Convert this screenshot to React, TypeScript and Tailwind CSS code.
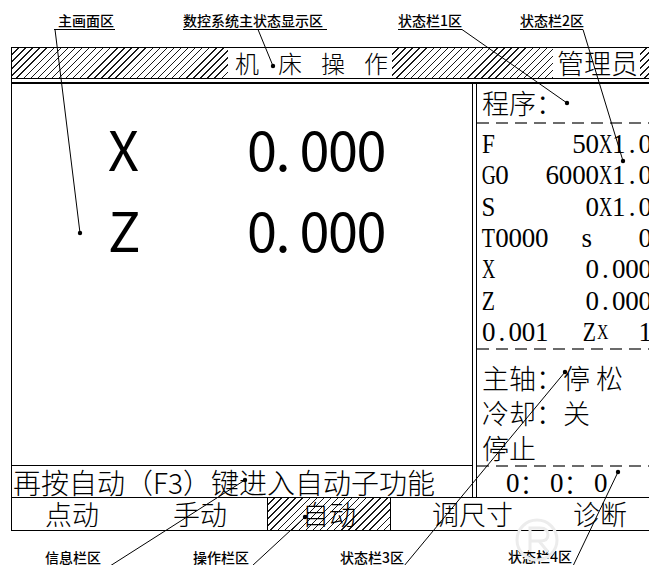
import React from "react";

const HATCH = "bg-[repeating-linear-gradient(135deg,transparent_0_4px,#1a1a1a_4px_5px)]";
const DASH = "h-[2px] bg-[repeating-linear-gradient(to_right,#6b6b6b_0_12px,transparent_12px_19px)]";
const CJK = "font-['Noto_Sans_CJK_SC',sans-serif]";
const SERIF = "font-['Liberation_Serif','Noto_Sans_CJK_SC',serif]";

const SQUEEZE: Record<string, string> = {
  X: "inline-block scale-x-[0.68]",
  Z: "inline-block scale-x-[0.8]",
  G: "inline-block scale-x-[0.72]",
  T: "inline-block scale-x-[0.8]",
  F: "inline-block scale-x-[0.86]",
  S: "inline-block scale-x-[0.92]",
};

function M({ t, className = "" }: { t: string; className?: string }) {
  return (
    <span className={"inline-flex " + className}>
      {Array.from(t).map((c, i) => (
        <span key={i} className="inline-flex w-[13.3px] justify-center">
          {c === " " ? "\u00a0" : SQUEEZE[c] ? <span className={SQUEEZE[c]}>{c}</span> : c}
        </span>
      ))}
    </span>
  );
}

function Row({ children }: { children: React.ReactNode }) {
  return (
    <div className={"flex h-[31.33px] leading-[31.33px] whitespace-nowrap " + SERIF}>{children}</div>
  );
}

export default function App() {
  return (
    <div className={"relative w-[649px] h-[565px] overflow-hidden bg-white text-black " + CJK}>
      <div className="pt-[47px] pl-[11px]">
        <div className="w-[638px] border-l border-black">
          {/* header */}
          <div className="flex h-[32px] border-y border-black">
            <div className={"w-[216px] " + HATCH} />
            <div className="w-[164px] pl-[7px] text-[24px] leading-[30px] tracking-[19px] font-light whitespace-nowrap">
              机床操作
            </div>
            <div className={"w-[161px] " + HATCH} />
            <div className="w-[87px] pl-[4px] text-[27px] leading-[30px] font-light whitespace-nowrap">管理员</div>
            <div className={"flex-1 " + HATCH} />
          </div>
          <div className="h-[3px]" />
          {/* body */}
          <div className="border-t-2 border-black">
            <div className="flex">
              {/* left column: main screen + info bar */}
              <div className="w-[460px] flex flex-col">
                <div className="h-[381px] pt-[37px] pl-[96px]">
                  <div className="flex h-[54px] text-[54px] leading-none">
                    <span className="w-[139px]">X</span>
                    <span className="tracking-[-1.5px]">0. 000</span>
                  </div>
                  <div className="flex h-[54px] mt-[27px] text-[54px] leading-none">
                    <span className="w-[139px]">Z</span>
                    <span className="tracking-[-1.5px]">0. 000</span>
                  </div>
                </div>
                <div className="h-[32px] border-t border-black pt-[2px] pl-[1px] text-[28px] leading-[29px] font-light whitespace-nowrap">
                  再按自动（F3）键进入自动子功能
                </div>
              </div>
              {/* double separator */}
              <div className="w-[5px] border-x border-black" />
              {/* right column: status bars */}
              <div className="flex-1 flex flex-col">
                <div className="h-[38px] pl-[5px] text-[27px] leading-[38px] font-light whitespace-nowrap">程序：</div>
                <div className={DASH} />
                <div className="h-[224px] pt-[5px] pl-[5px] text-[27px]">
                  <Row>
                    <M t="F" />
                    <span className="flex-1" />
                    <M t="50X1.0" className="mr-[-3px]" />
                  </Row>
                  <Row>
                    <M t="G0" />
                    <span className="flex-1" />
                    <M t="6000X1.0" className="mr-[-3px]" />
                  </Row>
                  <Row>
                    <M t="S" />
                    <span className="flex-1" />
                    <M t="0X1.0" className="mr-[-3px]" />
                  </Row>
                  <Row>
                    <span className="w-[98px]">
                      <M t="T0000" />
                    </span>
                    <M t="s" />
                    <span className="flex-1" />
                    <M t="0" className="mr-[-3px]" />
                  </Row>
                  <Row>
                    <M t="X" />
                    <span className="flex-1" />
                    <M t="0.000" className="mr-[-3px]" />
                  </Row>
                  <Row>
                    <M t="Z" />
                    <span className="flex-1" />
                    <M t="0.000" className="mr-[-3px]" />
                  </Row>
                  <Row>
                    <span className="w-[101px]">
                      <M t="0.001" />
                    </span>
                    <M t="Z" />
                    <span className="inline-flex w-[13.3px] justify-center text-[21px]">
                      <span className="inline-block scale-x-[0.75]">X</span>
                    </span>
                    <span className="flex-1" />
                    <M t="1" className="mr-[-3px]" />
                  </Row>
                </div>
                <div className={DASH} />
                <div className="h-[115px] pt-[10px] pl-[5px] text-[27px] leading-[35px] font-light whitespace-nowrap">
                  <div className="h-[35px]">主轴：停&nbsp;松</div>
                  <div className="h-[35px]">冷却：关</div>
                  <div className="h-[35px]">停止</div>
                </div>
                <div className={DASH} />
                <div className={"h-[30px] flex pl-[29px] pt-[2px] text-[27px] leading-[28px] whitespace-nowrap " + SERIF}>
                  <span className="w-[44px] flex">
                    <M t="0" />
                    <span className={CJK + " font-light"}>：</span>
                  </span>
                  <span className="w-[44px] flex">
                    <M t="0" />
                    <span className={CJK + " font-light"}>：</span>
                  </span>
                  <M t="0" />
                </div>
              </div>
            </div>
            {/* operation bar */}
            <div className="flex h-[34px] border-y border-black text-[27px] leading-[32px] font-light whitespace-nowrap">
              <span className="ml-[33px]">点动</span>
              <span className="ml-[74px]">手动</span>
              <div className={"ml-[40px] w-[124px] border-x border-black text-center " + HATCH}>自动</div>
              <span className="ml-[41px]">调尺寸</span>
              <span className="ml-[60px]">诊断</span>
            </div>
          </div>
        </div>
      </div>

      {/* annotation labels */}
      <span className="absolute left-[58px] top-[13px] text-[14px] leading-[14px] font-medium whitespace-nowrap">主画面区</span>
      <span className="absolute left-[183px] top-[13px] text-[14px] leading-[14px] font-medium whitespace-nowrap">数控系统主状态显示区</span>
      <span className="absolute left-[398px] top-[13px] text-[14px] leading-[14px] font-medium whitespace-nowrap">状态栏1区</span>
      <span className="absolute left-[520px] top-[13px] text-[14px] leading-[14px] font-medium whitespace-nowrap">状态栏2区</span>
      <span className="absolute left-[45px] top-[550px] text-[14px] leading-[14px] font-medium whitespace-nowrap">信息栏区</span>
      <span className="absolute left-[193px] top-[550px] text-[14px] leading-[14px] font-medium whitespace-nowrap">操作栏区</span>
      <span className="absolute left-[340px] top-[550px] text-[14px] leading-[14px] font-medium whitespace-nowrap">状态栏3区</span>
      <span className="absolute left-[508px] top-[549px] text-[14px] leading-[14px] font-medium whitespace-nowrap">状态栏4区</span>

      {/* leader lines and faint watermark */}
      <svg className="absolute left-0 top-0 pointer-events-none" width="649" height="565" viewBox="0 0 649 565">
        <g fill="none" stroke="#ececec" strokeWidth="3">
          <circle cx="537" cy="540" r="20" />
          <path d="M530 552 L530 528 L540 528 Q548 528 548 535 Q548 541 540 541 L531 541 M539 541 L548 552" />
        </g>
        <g stroke="#000" strokeWidth="1" fill="none">
          <line x1="54" y1="29.5" x2="115" y2="29.5" />
          <line x1="183" y1="29.5" x2="327" y2="29.5" />
          <line x1="398" y1="29.5" x2="462" y2="29.5" />
          <line x1="520" y1="29.5" x2="583" y2="29.5" />
          <line x1="55" y1="29.5" x2="80" y2="233" />
          <line x1="258" y1="29.5" x2="273" y2="66" />
          <line x1="462" y1="29.5" x2="567" y2="103" />
          <line x1="583" y1="29.5" x2="623" y2="161" />
          <line x1="110" y1="566" x2="245" y2="480" />
          <line x1="252" y1="566" x2="305" y2="517" />
          <line x1="404" y1="566" x2="565" y2="372" />
          <line x1="573" y1="566" x2="618" y2="472" />
        </g>
        <g fill="#000">
          <circle cx="80" cy="233" r="2.2" />
          <circle cx="273" cy="66" r="2.2" />
          <circle cx="567" cy="103" r="2.2" />
          <circle cx="623" cy="161" r="2.2" />
          <circle cx="245" cy="480" r="2.2" />
          <circle cx="305" cy="517" r="2.2" />
          <circle cx="565" cy="372" r="2.2" />
          <circle cx="618" cy="472" r="2.2" />
        </g>
      </svg>
    </div>
  );
}
